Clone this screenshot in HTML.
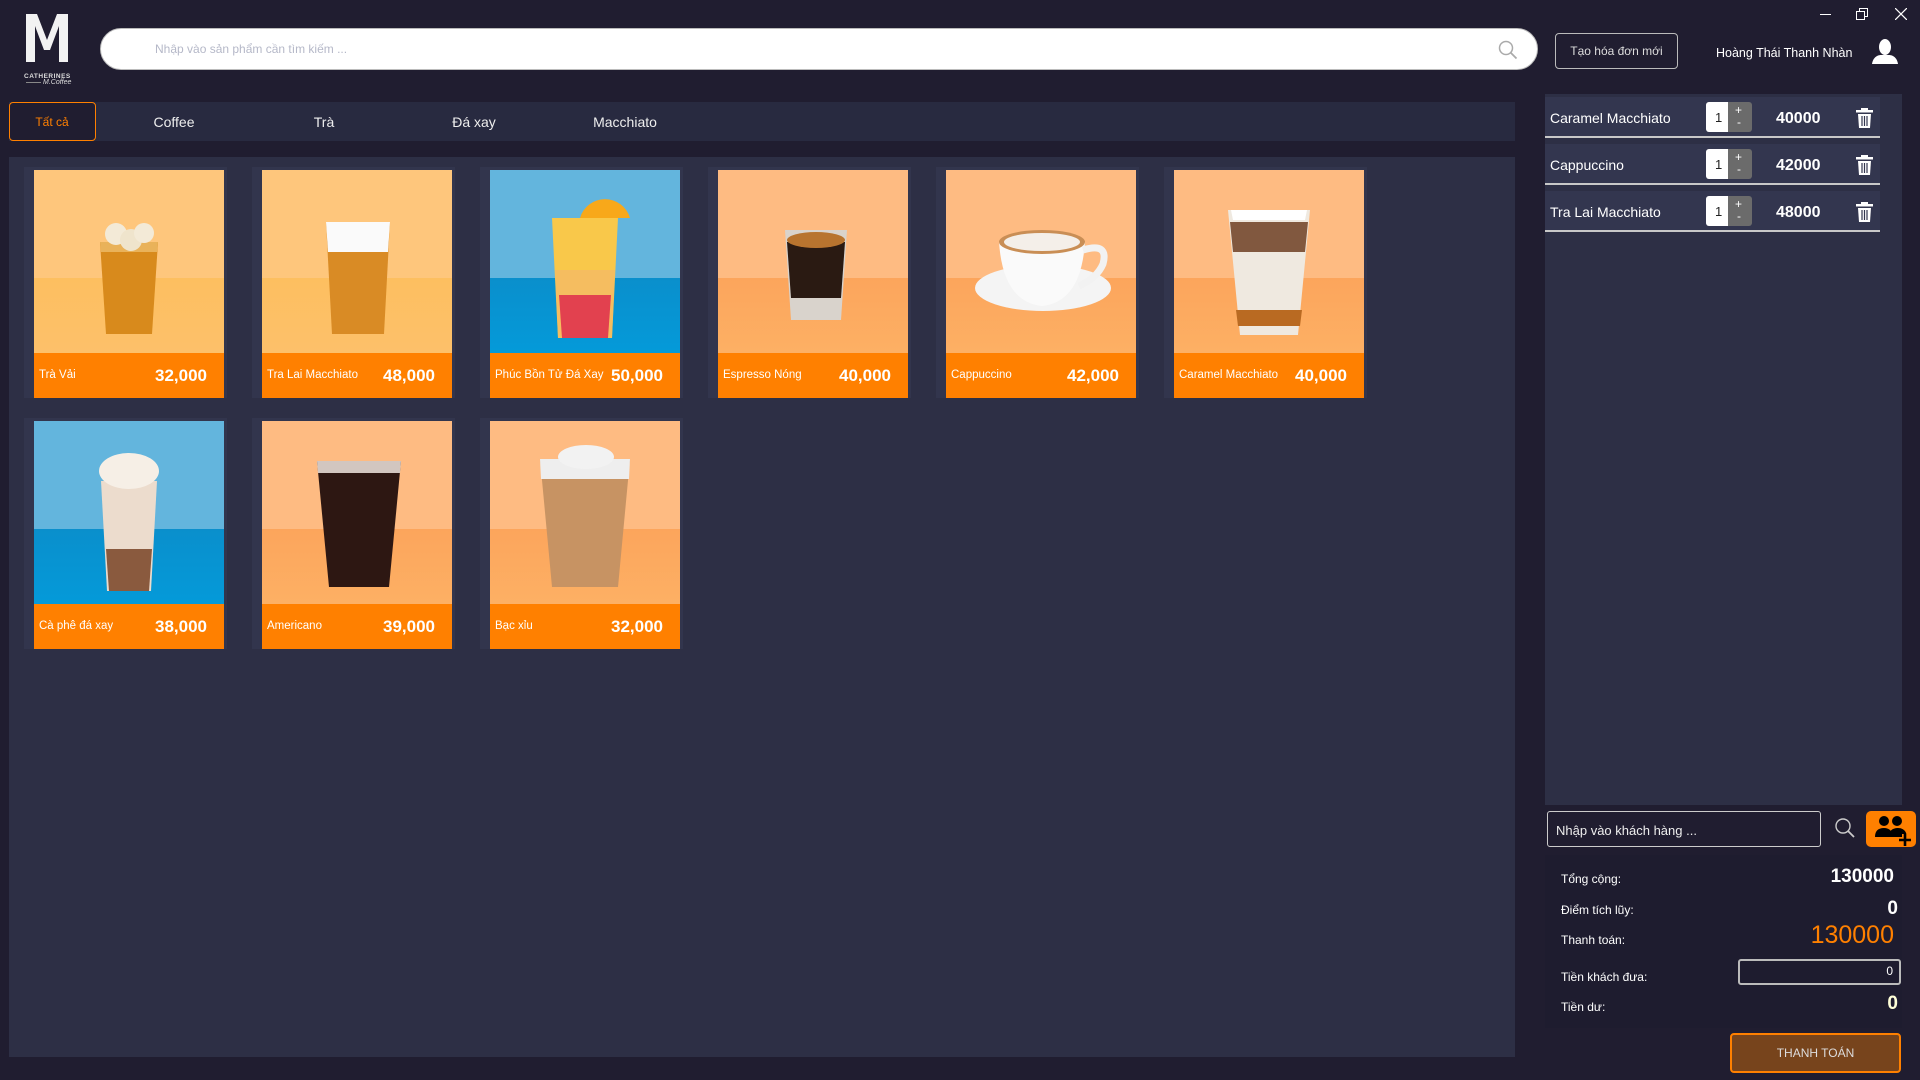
<!DOCTYPE html>
<html><head><meta charset="utf-8"><style>
*{margin:0;padding:0;box-sizing:border-box}
body{width:1920px;height:1080px;background:#201d30;font-family:"Liberation Sans",sans-serif;position:relative;overflow:hidden;color:#fff}
.a{position:absolute}
.search{left:100px;top:28px;width:1438px;height:42px;background:#fff;border-radius:21px;border:1px solid #bbb}
.search span{position:absolute;left:54px;top:13px;font-size:12px;color:#b5b8c8}
.tabs{left:9px;top:102px;width:1506px;height:39px;background:#282a40}
.tab{position:absolute;top:12px;font-size:14px;color:#eee;transform:translateX(-50%)}
.panel{left:9px;top:157px;width:1506px;height:900px;background:#2d2f45}
.card{position:absolute;width:203px;height:231px;background:#32354d}
.img{position:absolute;left:10px;top:3px;width:190px;height:183px;overflow:hidden}
.bar{position:absolute;left:10px;top:186px;width:190px;height:45px;background:#ff8000}
.bar .n{position:absolute;left:5px;top:16px;font-size:11.5px}
.bar .p{position:absolute;right:17px;top:13px;font-size:17px;font-weight:bold}
.cart{left:1545px;top:94px;width:357px;height:711px;background:#2d2f45}
.row{position:absolute;left:0;width:335px;height:41px;background:#33364f;border-bottom:2px solid #c8c8c8}
.row .n{position:absolute;left:5px;top:13px;font-size:14px}
.qty{position:absolute;left:161px;top:5px;width:46px;height:30px;border-radius:3px;background:#6b6b6b;overflow:hidden}
.qty b{position:absolute;left:0;top:0;width:22px;height:30px;background:#fff;color:#222;font-weight:normal;font-size:13px;padding:8px 0 0 9px}
.qty i{position:absolute;left:29px;font-style:normal;font-size:12px;color:#fff}
.row .pr{position:absolute;left:231px;top:13px;font-size:16px;font-weight:bold}
.lbl{position:absolute;left:1561px;font-size:12px}
.val{position:absolute;right:22px;font-weight:bold}
</style></head><body>
<div class="a" style="left:25px;top:14px;width:45px;height:48px">
<svg width="45" height="48" viewBox="0 0 45 48"><path d="M1 0h11l10 26 10-26h11v48h-9V12l-9 24h-6L10 12v36H1z" fill="#f2f2f2"/><rect x="11" y="40" width="4" height="4" fill="#201d30"/><rect x="29" y="40" width="4" height="4" fill="#201d30"/></svg></div>
<div class="a" style="left:24px;top:73px;font-size:6.5px;letter-spacing:.5px;color:#ddd;font-weight:bold">CATHERINES</div>
<div class="a" style="left:26px;top:82px;width:44px;height:1px;background:#888"></div>
<div class="a" style="left:41px;top:79px;font-size:7px;color:#ddd;font-style:italic;background:#201d30;padding:0 2px">M.Coffee</div>
<div class="a search"><span>Nhập vào sản phẩm cần tìm kiếm ...</span>
<svg class="a" style="left:1397px;top:11px" width="20" height="20" viewBox="0 0 20 20"><circle cx="8" cy="8" r="6.5" fill="none" stroke="#aaa" stroke-width="1.5"/><path d="M12.5 12.5l6 6" stroke="#aaa" stroke-width="1.8"/></svg></div>
<div class="a" style="left:1555px;top:33px;width:123px;height:36px;border:1px solid #bbb;border-radius:4px;font-size:12px;color:#ddd;text-align:center;line-height:34px">Tạo hóa đơn mới</div>
<div class="a" style="left:1716px;top:46px;font-size:12.5px;color:#fff">Hoàng Thái Thanh Nhàn</div>
<svg class="a" style="left:1872px;top:38px" width="26" height="26" viewBox="0 0 26 26"><ellipse cx="13" cy="9" rx="6" ry="8" fill="#fff"/><path d="M0 26c1-7 6-9 9-9h8c3 0 8 2 9 9z" fill="#fff"/></svg>
<div class="a" style="left:1820px;top:14px;width:11px;height:1px;background:#fff"></div>
<svg class="a" style="left:1856px;top:8px" width="12" height="12"><rect x="0.5" y="3.5" width="8" height="8" fill="none" stroke="#fff"/><path d="M3.5 3.5V.5h8v8h-3" fill="none" stroke="#fff"/></svg>
<svg class="a" style="left:1895px;top:8px" width="12" height="12"><path d="M0 0l12 12M12 0L0 12" stroke="#fff" stroke-width="1.2"/></svg>
<div class="a tabs">
<div class="a" style="left:0;top:0;width:87px;height:39px;border:1px solid #ff8000;border-radius:4px;background:#201d30"></div>
<div class="tab" style="left:43px;top:13px;font-size:12px;color:#ff8000">Tất cả</div>
<div class="tab" style="left:165px">Coffee</div>
<div class="tab" style="left:315px">Trà</div>
<div class="tab" style="left:465px">Đá xay</div>
<div class="tab" style="left:616px">Macchiato</div>
</div>
<div class="a panel"></div>

<div class="card" style="left:24px;top:167px"><div class="img" style="background:linear-gradient(#fec67c 0,#fec67c 59%,#fdbf60 59%,#fdc06a)">
<svg width="190" height="183"><path d="M66 72h58l-6 92h-46z" fill="#d88a1c"/><path d="M66 72h58l-1 10h-56z" fill="#e9b25a"/><circle cx="82" cy="64" r="11" fill="#f3ead7"/><circle cx="97" cy="70" r="11" fill="#efe4cc"/><circle cx="110" cy="63" r="10" fill="#f3ead7"/></svg></div>
<div class="bar"><span class="n">Trà Vải</span><span class="p">32,000</span></div></div>

<div class="card" style="left:252px;top:167px"><div class="img" style="background:linear-gradient(#fec67c 0,#fec67c 59%,#fdbf60 59%,#fdc06a)">
<svg width="190" height="183"><path d="M64 52h64l-6 112h-52z" fill="#d98b25"/><path d="M64 52h64l-2 30h-60z" fill="#fafafa"/></svg></div>
<div class="bar"><span class="n">Tra Lai Macchiato</span><span class="p">48,000</span></div></div>

<div class="card" style="left:480px;top:167px"><div class="img" style="background:linear-gradient(#63b5dd 0,#63b5dd 59%,#0a8fcc 59%,#049ad9)">
<svg width="190" height="183"><path d="M62 48h66l-6 120h-54z" fill="#f9c84a"/><path d="M65 100h60l-3 68h-54z" fill="#f3b86a" opacity=".7"/><path d="M69 125h52l-3 43h-46z" fill="#e2414f"/><path d="M90 48a26 26 0 0 1 50 0z" fill="#f8a81a"/></svg></div>
<div class="bar"><span class="n">Phúc Bồn Tử Đá Xay</span><span class="p">50,000</span></div></div>

<div class="card" style="left:708px;top:167px"><div class="img" style="background:linear-gradient(#febb82 0,#febb82 59%,#fca55c 59%,#fdb064)">
<svg width="190" height="183"><path d="M67 60h62l-6 90h-50z" fill="#d9d3cc"/><path d="M69 72h58l-4 56h-50z" fill="#2a1a12"/><ellipse cx="98" cy="70" rx="29" ry="8" fill="#b8742f"/></svg></div>
<div class="bar"><span class="n">Espresso Nóng</span><span class="p">40,000</span></div></div>

<div class="card" style="left:936px;top:167px"><div class="img" style="background:linear-gradient(#febb82 0,#febb82 59%,#fca55c 59%,#fdb064)">
<svg width="190" height="183"><ellipse cx="97" cy="118" rx="68" ry="23" fill="#f4f4f4"/><path d="M53 72h86q-4 60-43 64q-39-4-43-64z" fill="#fafafa"/><path d="M137 80q26-8 20 14q-6 14-24 22" fill="none" stroke="#f2f2f2" stroke-width="7"/><ellipse cx="96" cy="72" rx="43" ry="12" fill="#c98e55"/><ellipse cx="96" cy="72" rx="38" ry="9" fill="#f4efe9"/></svg></div>
<div class="bar"><span class="n">Cappuccino</span><span class="p">42,000</span></div></div>

<div class="card" style="left:1164px;top:167px"><div class="img" style="background:linear-gradient(#febb82 0,#febb82 59%,#fca55c 59%,#fdb064)">
<svg width="190" height="183"><path d="M54 40h82l-12 125h-58z" fill="#efe9e0"/><path d="M56 52h78l-3 30h-72z" fill="#6d3e22" opacity=".85"/><path d="M62 140h66l-2 16h-62z" fill="#b96a22"/><path d="M57 40h76l-2 10h-72z" fill="#fff"/></svg></div>
<div class="bar"><span class="n">Caramel Macchiato</span><span class="p">40,000</span></div></div>

<div class="card" style="left:24px;top:418px"><div class="img" style="background:linear-gradient(#63b5dd 0,#63b5dd 59%,#0a8fcc 59%,#049ad9)">
<svg width="190" height="183"><path d="M67 60h56l-6 110h-44z" fill="#ecdccd"/><path d="M72 128h46l-3 42h-40z" fill="#8a5a3e"/><ellipse cx="95" cy="50" rx="30" ry="18" fill="#f6efe6"/></svg></div>
<div class="bar"><span class="n">Cà phê đá xay</span><span class="p">38,000</span></div></div>

<div class="card" style="left:252px;top:418px"><div class="img" style="background:linear-gradient(#febb82 0,#febb82 59%,#fca55c 59%,#fdb064)">
<svg width="190" height="183"><path d="M55 40h84l-12 126h-60z" fill="#2d1712"/><path d="M55 40h84l-1 12h-82z" fill="#d2c6c0"/></svg></div>
<div class="bar"><span class="n">Americano</span><span class="p">39,000</span></div></div>

<div class="card" style="left:480px;top:418px"><div class="img" style="background:linear-gradient(#febb82 0,#febb82 59%,#fca55c 59%,#fdb064)">
<svg width="190" height="183"><path d="M50 38h90l-12 128h-66z" fill="#c79363"/><path d="M50 38h90l-1 20h-88z" fill="#eee"/><ellipse cx="96" cy="36" rx="28" ry="12" fill="#f2f2f2"/></svg></div>
<div class="bar"><span class="n">Bạc xỉu</span><span class="p">32,000</span></div></div>

<div class="a cart">
<div class="row" style="top:3px"><span class="n">Caramel Macchiato</span><div class="qty"><b>1</b><i style="top:1px">+</i><i style="top:13px;left:31px">-</i></div><span class="pr">40000</span></div>
<div class="row" style="top:50px"><span class="n">Cappuccino</span><div class="qty"><b>1</b><i style="top:1px">+</i><i style="top:13px;left:31px">-</i></div><span class="pr">42000</span></div>
<div class="row" style="top:97px"><span class="n">Tra Lai Macchiato</span><div class="qty"><b>1</b><i style="top:1px">+</i><i style="top:13px;left:31px">-</i></div><span class="pr">48000</span></div>
</div>
<svg class="a" style="left:1856px;top:108px" width="17" height="20" viewBox="0 0 17 20"><rect x="0" y="2" width="17" height="2.5" fill="#fff"/><rect x="5" y="0" width="7" height="2.5" fill="#fff"/><path d="M2 6h13l-1 14H3z" fill="#fff"/><path d="M6 8v10M8.5 8v10M11 8v10" stroke="#33364f" stroke-width="1.2"/></svg>
<svg class="a" style="left:1856px;top:155px" width="17" height="20" viewBox="0 0 17 20"><rect x="0" y="2" width="17" height="2.5" fill="#fff"/><rect x="5" y="0" width="7" height="2.5" fill="#fff"/><path d="M2 6h13l-1 14H3z" fill="#fff"/><path d="M6 8v10M8.5 8v10M11 8v10" stroke="#33364f" stroke-width="1.2"/></svg>
<svg class="a" style="left:1856px;top:202px" width="17" height="20" viewBox="0 0 17 20"><rect x="0" y="2" width="17" height="2.5" fill="#fff"/><rect x="5" y="0" width="7" height="2.5" fill="#fff"/><path d="M2 6h13l-1 14H3z" fill="#fff"/><path d="M6 8v10M8.5 8v10M11 8v10" stroke="#33364f" stroke-width="1.2"/></svg>

<div class="a" style="left:1547px;top:811px;width:274px;height:36px;border:1px solid #ccc;border-radius:3px;font-size:13px;color:#eee;padding:11px 0 0 8px">Nhập vào khách hàng ...</div>
<svg class="a" style="left:1834px;top:817px" width="22" height="22" viewBox="0 0 22 22"><circle cx="9" cy="9" r="7" fill="none" stroke="#ccc" stroke-width="1.4"/><path d="M14 14l6 6" stroke="#ccc" stroke-width="1.8"/></svg>
<div class="a" style="left:1866px;top:811px;width:50px;height:36px;background:#ff8000;border-radius:5px">
<svg width="50" height="36" viewBox="0 0 50 36"><circle cx="18" cy="10" r="5" fill="#000"/><circle cx="31" cy="10" r="5" fill="#000"/><path d="M9 26q0-9 9-9q8 0 9 9z" fill="#000"/><path d="M23 26q0-9 9-9q8 0 9 9z" fill="#000"/><path d="M33 29h12M39 23v12" stroke="#ff8000" stroke-width="6"/><path d="M33 29h12M39 23v12" stroke="#000" stroke-width="2.6"/></svg></div>

<div class="a" style="left:1545px;top:855px;width:357px;height:173px;background:#1e1c2f"></div>
<div class="lbl" style="top:872px">Tổng cộng:</div>
<div class="val" style="top:866px;font-size:19px;right:26px">130000</div>
<div class="lbl" style="top:903px">Điểm tích lũy:</div>
<div class="val" style="top:898px;font-size:19px;right:22px">0</div>
<div class="lbl" style="top:933px">Thanh toán:</div>
<div class="val" style="top:921px;font-size:25px;font-weight:normal;color:#ff8000;right:26px">130000</div>
<div class="a" style="left:1738px;top:959px;width:163px;height:26px;border:2px solid #bbb;border-radius:3px;background:#1e1c2f;font-size:12px;text-align:right;padding:3px 6px 0 0">0</div>
<div class="lbl" style="top:970px">Tiền khách đưa:</div>
<div class="lbl" style="top:1000px">Tiền dư:</div>
<div class="val" style="top:993px;font-size:19px;color:#ffffd8">0</div>
<div class="a" style="left:1730px;top:1033px;width:171px;height:40px;background:#77441c;border:2px solid #ff8000;border-radius:4px;font-size:12px;color:#ddd;text-align:center;line-height:36px">THANH TOÁN</div>
</body></html>
